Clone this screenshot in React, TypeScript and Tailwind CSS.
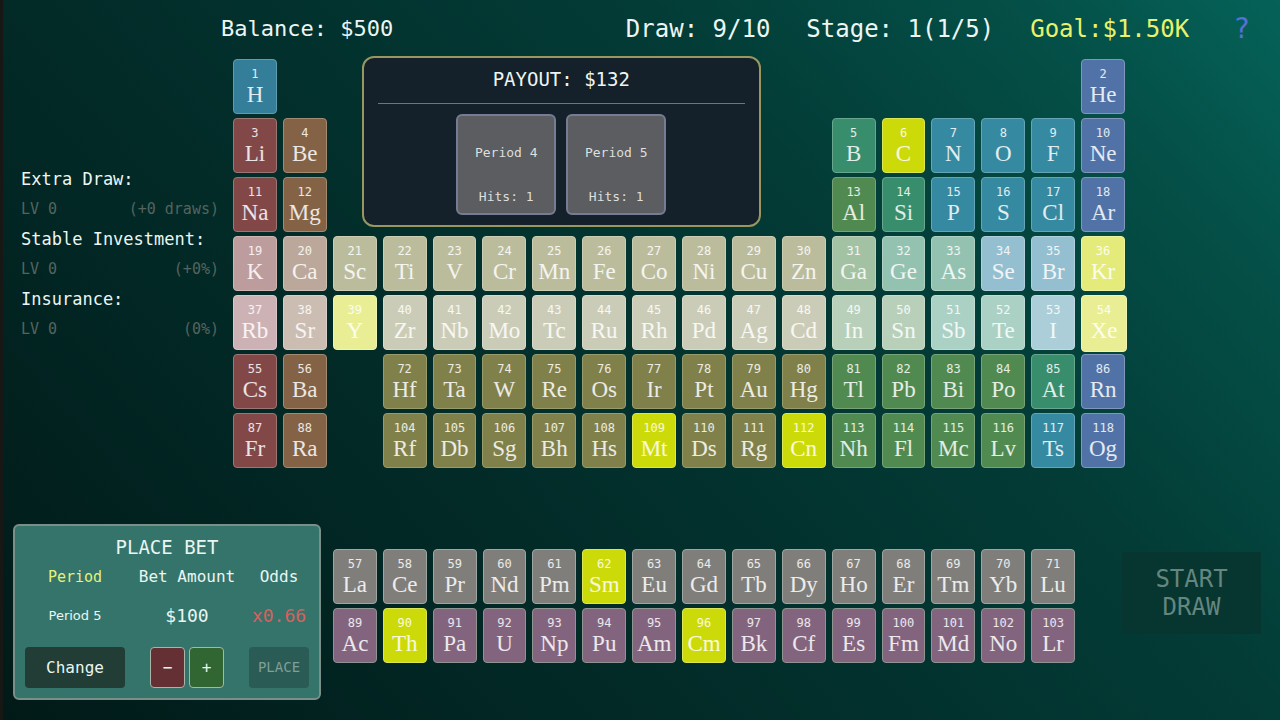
import { useState } from "react";
import clsx from "clsx";

const tones = {
  hydrogen: "bg-[#357e9a] border-[#5f9cb1]",
  red: "bg-[#824848] border-[#9b7672]",
  brown: "bg-[#836246] border-[#a38b72]",
  olive: "bg-[#80804a] border-[#989b6c]",
  green: "bg-[#508a50] border-[#78a377]",
  teal: "bg-[#388d6d] border-[#68a68d]",
  blue: "bg-[#3589a1] border-[#66a5b6]",
  indigo: "bg-[#5072a6] border-[#7f97bb]",
  gray: "bg-[#7f7e7a] border-[#9ea6a1]",
  purple: "bg-[#83647e] border-[#8f9491]",
  drawn: "bg-[#cdda0a] border-[#dbe650]",
  // period 4
  red4: "bg-[#bd9c9d] border-[#cfb6b5]",
  brown4: "bg-[#bba89a] border-[#cdbfb3]",
  olive4: "bg-[#bbbc9c] border-[#cccdb5]",
  green4: "bg-[#a3c2a3] border-[#bad1ba]",
  teal4: "bg-[#94c2b1] border-[#b0d2c5]",
  blue4: "bg-[#93bfd0] border-[#b0d0dc]",
  drawn4: "bg-[#e4eb7a] border-[#edf2a0]",
  // period 5
  red5: "bg-[#cdb2b5] border-[#dac6c8]",
  brown5: "bg-[#ccbdb3] border-[#d9cec7]",
  olive5: "bg-[#cbccb7] border-[#d9dac9]",
  green5: "bg-[#b8d0b9] border-[#c9dcca]",
  teal5: "bg-[#abd0c4] border-[#c1dcd3]",
  blue5: "bg-[#abced8] border-[#c2dbe2]",
  drawn5: "bg-[#e9ee94] border-[#f0f4b4]",
};

type Tone = keyof typeof tones;

// [tone, first atomic number, symbols]
type Run = [Tone, number, string];

const periods: Run[][] = [
  [
    ["hydrogen", 1, "H"],
    ["indigo", 2, "He"],
  ],
  [
    ["red", 3, "Li"],
    ["brown", 4, "Be"],
    ["teal", 5, "B"],
    ["drawn", 6, "C"],
    ["blue", 7, "N O F"],
    ["indigo", 10, "Ne"],
  ],
  [
    ["red", 11, "Na"],
    ["brown", 12, "Mg"],
    ["green", 13, "Al"],
    ["teal", 14, "Si"],
    ["blue", 15, "P S Cl"],
    ["indigo", 18, "Ar"],
  ],
  [
    ["red4", 19, "K"],
    ["brown4", 20, "Ca"],
    ["olive4", 21, "Sc Ti V Cr Mn Fe Co Ni Cu Zn"],
    ["green4", 31, "Ga"],
    ["teal4", 32, "Ge As"],
    ["blue4", 34, "Se Br"],
    ["drawn4", 36, "Kr"],
  ],
  [
    ["red5", 37, "Rb"],
    ["brown5", 38, "Sr"],
    ["drawn5", 39, "Y"],
    ["olive5", 40, "Zr Nb Mo Tc Ru Rh Pd Ag Cd"],
    ["green5", 49, "In Sn"],
    ["teal5", 51, "Sb Te"],
    ["blue5", 53, "I"],
    ["drawn5", 54, "Xe"],
  ],
  [
    ["red", 55, "Cs"],
    ["brown", 56, "Ba"],
    ["olive", 72, "Hf Ta W Re Os Ir Pt Au Hg"],
    ["green", 81, "Tl Pb Bi Po"],
    ["teal", 85, "At"],
    ["indigo", 86, "Rn"],
  ],
  [
    ["red", 87, "Fr"],
    ["brown", 88, "Ra"],
    ["olive", 104, "Rf Db Sg Bh Hs"],
    ["drawn", 109, "Mt"],
    ["olive", 110, "Ds Rg"],
    ["drawn", 112, "Cn"],
    ["green", 113, "Nh Fl Mc Lv"],
    ["blue", 117, "Ts"],
    ["indigo", 118, "Og"],
  ],
];

const series: Run[][] = [
  [
    ["gray", 57, "La Ce Pr Nd Pm"],
    ["drawn", 62, "Sm"],
    ["gray", 63, "Eu Gd Tb Dy Ho Er Tm Yb Lu"],
  ],
  [
    ["purple", 89, "Ac"],
    ["drawn", 90, "Th"],
    ["purple", 91, "Pa U Np Pu Am"],
    ["drawn", 96, "Cm"],
    ["purple", 97, "Bk Cf Es Fm Md No Lr"],
  ],
];

const upgrades = [
  { label: "Extra Draw:", level: "LV 0", effect: "(+0 draws)" },
  { label: "Stable Investment:", level: "LV 0", effect: "(+0%)" },
  { label: "Insurance:", level: "LV 0", effect: "(0%)" },
];

const payouts = [
  { label: "Period 4", hits: "Hits: 1" },
  { label: "Period 5", hits: "Hits: 1" },
];

// where a gap in the table ends, the next element names its column
const columnStart: Record<number, string> = {
  2: "col-start-18",
  5: "col-start-13",
  13: "col-start-13",
  72: "col-start-4",
  104: "col-start-4",
};

function Elements({ runs }: { runs: Run[][] }) {
  return (
    <>
      {runs.flat().map(([tone, first, symbols]) =>
        symbols.split(" ").map((symbol, i) => {
          const number = first + i;
          return (
            <div
              key={number}
              className={clsx(
                "flex h-[55px] flex-col items-center rounded-sm border pt-[7px] text-white/85",
                tones[tone],
                columnStart[number],
                number === 54 && "-mr-0.5 -mb-0.5 h-[57px]"
              )}
            >
              <span className="text-[12px] leading-[14px]">{number}</span>
              <span className="font-['Liberation_Serif',serif] text-[23px] leading-7">
                {symbol}
              </span>
            </div>
          );
        })
      )}
    </>
  );
}

function Payout() {
  return (
    <section className="col-start-3 col-span-9 row-start-1 row-span-3 -mt-[3px] mr-[15px] mb-[5px] ml-[29px] flex flex-col items-center rounded-xl border-2 border-[#99965f] bg-[#14212a] px-3.5 text-[#eef4f2]">
      <h2 className="w-full border-b border-[#6d7779] pt-[7px] pb-2.5 text-center text-[19px] leading-7">
        PAYOUT: $132
      </h2>
      <ul className="mt-2.5 flex gap-2.5">
        {payouts.map((payout) => (
          <li
            key={payout.label}
            className="flex h-[101px] w-[100px] flex-col items-center justify-end gap-6 rounded-md border-2 border-[#777c95] bg-[#5b5d60] pb-1.5 text-[13px] leading-5 text-[#dedfdf]"
          >
            <span>{payout.label}</span>
            <span>{payout.hits}</span>
          </li>
        ))}
      </ul>
    </section>
  );
}

function BetPanel() {
  const [bet, setBet] = useState(100);

  return (
    <section className="w-[308px] shrink-0 rounded-md border-2 border-[#7b8f89] bg-[#35746b] px-2.5 pt-[7px] pb-2.5 text-center text-[#e9f6f2]">
      <h2 className="text-[19px] leading-7">PLACE BET</h2>
      <div className="grid grid-cols-[100px_1fr_60px] items-center">
        <span className="text-[15px] leading-8 text-[#e6f17c]">Period</span>
        <span className="text-[16px] leading-8">Bet Amount</span>
        <span className="text-[16px] leading-8">Odds</span>
        <span className="font-['DejaVu_Sans',sans-serif] text-[13px] leading-[46px]">Period 5</span>
        <span className="text-[18px] leading-[46px]">${bet}</span>
        <span className="text-[18px] leading-[46px] text-[#d9605e]">x0.66</span>
        <button className="mt-2 h-[41px] rounded-sm bg-[#223d35] text-[16px]">Change</button>
        <div className="mt-2 flex justify-center gap-1">
          <button
            aria-label="Lower bet"
            onClick={() => setBet(Math.max(0, bet - 100))}
            className="h-[41px] w-[35px] rounded-sm border border-[#a9b5a9] bg-[#643033] text-[16px]"
          >
            −
          </button>
          <button
            aria-label="Raise bet"
            onClick={() => setBet(bet + 100)}
            className="h-[41px] w-[35px] rounded-sm border border-[#a9b5a9] bg-[#316632] text-[16px]"
          >
            +
          </button>
        </div>
        <button disabled className="mt-2 h-[41px] rounded-sm bg-[#2a5b55] text-[14px] text-[#7f9f99]">
          PLACE
        </button>
      </div>
    </section>
  );
}

export default function App() {
  return (
    <div className="min-h-screen border-l-3 border-[#171716] bg-[linear-gradient(48deg,#011a18_0%,#022a27_34%,#033b36_66%,#044f47_86%,#056258_100%)] font-['DejaVu_Sans_Mono',monospace]">
      <header className="flex h-[59px] items-center gap-9 pr-[30px] pb-0.5 pl-[218px] text-[24px] text-[#edf6f3]">
        <span className="mr-auto text-[22px]">Balance: $500</span>
        <span>Draw: 9/10</span>
        <span>Stage: 1(1/5)</span>
        <span className="text-[#e9f26a]">Goal:$1.50K</span>
        <button aria-label="Help" className="ml-2 text-[28px] leading-8 text-[#5570d8]">
          ?
        </button>
      </header>

      <main className="flex pr-[155px]">
        <aside className="w-[230px] shrink-0 pt-[105px] pr-3.5 pl-[18px] leading-[30px]">
          {upgrades.map((upgrade) => (
            <div key={upgrade.label}>
              <h3 className="text-[17px] text-[#edf6f3]">{upgrade.label}</h3>
              <p className="flex justify-between text-[15px] text-[#54645f]">
                <span>{upgrade.level}</span>
                <span>{upgrade.effect}</span>
              </p>
            </div>
          ))}
        </aside>
        <section className="grid flex-1 grid-cols-18 content-start gap-x-1.5 gap-y-1">
          <Payout />
          <Elements runs={periods} />
        </section>
      </main>

      <footer className="mt-14 flex items-start pr-[19px] pb-5 pl-2.5">
        <BetPanel />
        <section className="mt-[25px] ml-3 grid flex-1 grid-cols-15 gap-x-1.5 gap-y-1">
          <Elements runs={series} />
        </section>
        <button
          disabled
          className="mt-7 ml-[47px] h-[82px] w-[139px] shrink-0 bg-[#07352f] text-[24px] leading-7 text-[#64867f]"
        >
          START
          <br />
          DRAW
        </button>
      </footer>
    </div>
  );
}
